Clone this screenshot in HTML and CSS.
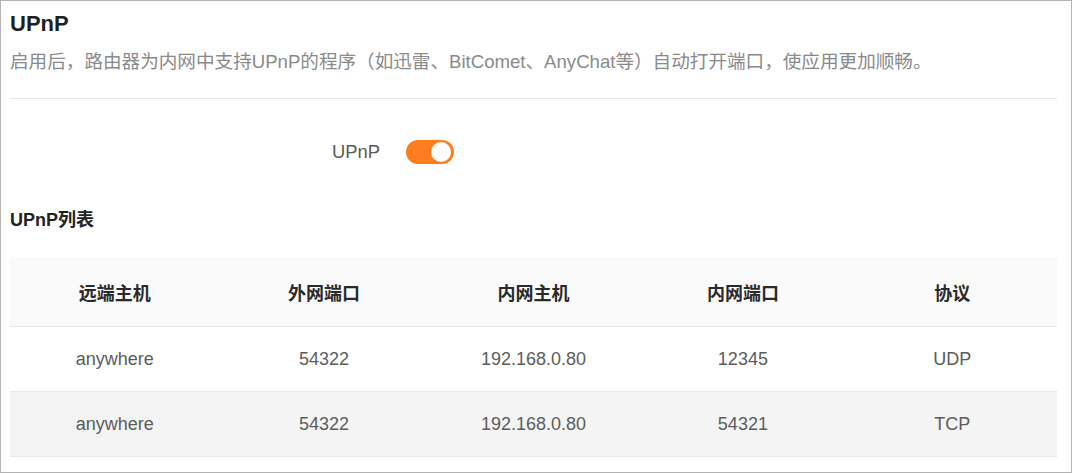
FILE: index.html
```html
<!DOCTYPE html>
<html lang="zh-CN">
<head>
<meta charset="utf-8">
<title>UPnP</title>
<link rel="stylesheet" href="styles.css">
</head>
<body>
<div class="frame">
  <h1 class="title">UPnP</h1>
  <p class="desc">启用后，路由器为内网中支持UPnP的程序（如迅雷、BitComet、AnyChat等）自动打开端口，使应用更加顺畅。</p>
  <div class="divider"></div>
  <div class="switch-row">
    <span class="switch-label">UPnP</span>
    <span class="switch on"><span class="knob"></span></span>
  </div>
  <h2 class="subtitle">UPnP列表</h2>
  <div class="table">
    <div class="row head">
      <div class="cell">远端主机</div>
      <div class="cell">外网端口</div>
      <div class="cell">内网主机</div>
      <div class="cell">内网端口</div>
      <div class="cell">协议</div>
    </div>
    <div class="row">
      <div class="cell">anywhere</div>
      <div class="cell">54322</div>
      <div class="cell">192.168.0.80</div>
      <div class="cell">12345</div>
      <div class="cell">UDP</div>
    </div>
    <div class="row alt">
      <div class="cell">anywhere</div>
      <div class="cell">54322</div>
      <div class="cell">192.168.0.80</div>
      <div class="cell">54321</div>
      <div class="cell">TCP</div>
    </div>
  </div>
</div>
</body>
</html>
```

FILE: styles.css
```css
* { box-sizing: border-box; }
html, body { margin: 0; padding: 0; background: #fff; }
body {
  font-family: "Liberation Sans", Arial, "Noto Sans CJK SC", sans-serif;
  color: #333;
}
.frame {
  width: 1072px;
  height: 473px;
  border: 1px solid #b4b4b4;
  padding: 11px 14px 0 9px;
  overflow: hidden;
}
.title {
  margin: 0;
  font-size: 22px;
  line-height: 24px;
  font-weight: bold;
  color: #1f1f1f;
}
.desc {
  margin: 13px 0 0;
  font-size: 18.6px;
  line-height: 26px;
  color: #8a8a8a;
  white-space: nowrap;
}
.divider {
  margin-top: 23px;
  height: 1px;
  background: #e6e6e6;
}
.switch-row {
  display: flex;
  align-items: center;
  gap: 26px;
  margin-top: 41px;
  height: 24px;
}
.switch-label {
  width: 370px;
  text-align: right;
  font-size: 18.4px;
  color: #5a5a5a;
}
.switch {
  position: relative;
  width: 48px;
  height: 24px;
  border-radius: 12px;
  background: #ff7d1e;
}
.switch .knob {
  position: absolute;
  top: 2px;
  right: 3px;
  width: 20px;
  height: 20px;
  border-radius: 50%;
  background: #fff;
}
.subtitle {
  margin: 44px 0 0;
  font-size: 18px;
  line-height: 24px;
  font-weight: bold;
  color: #222;
}
.table {
  margin-top: 25px;
  width: 1047px;
}
.row {
  display: grid;
  grid-template-columns: repeat(5, 1fr);
  height: 65px;
  border-bottom: 1px solid #e6e6e6;
  align-items: center;
  font-size: 18px;
  color: #5c5c5c;
}
.row.head {
  height: 70px;
  background: #fafafa;
  font-weight: bold;
  color: #2a2a2a;
}
.row.alt { background: #f4f4f4; }
.cell { text-align: center; }
```
